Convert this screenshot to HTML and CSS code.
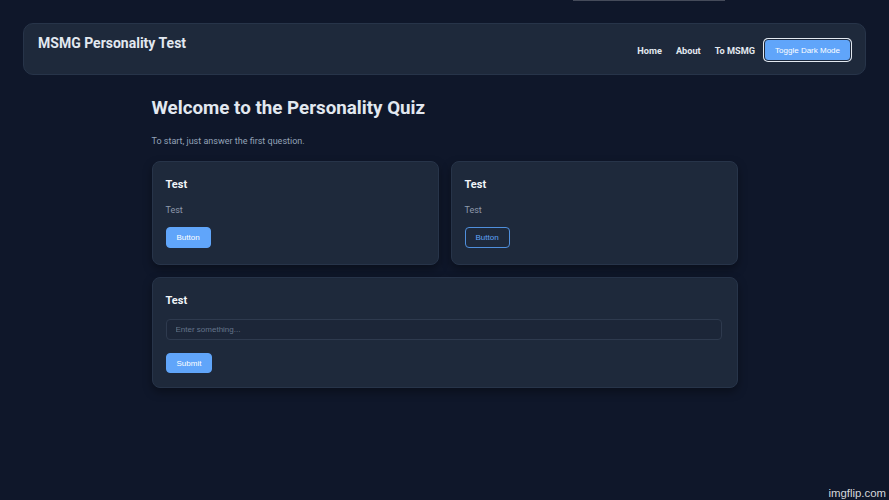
FILE: index.html
```html
<!DOCTYPE html>
<html lang="en">

<head>
    <meta charset="UTF-8">
    <meta name="viewport" content="width=device-width, initial-scale=1.0">
    <title>MSMG Personality Test</title>
    <link rel="stylesheet" href="styles.css">
</head>

<body>
    <div class="top-line"></div>

    <!-- Navigation bar -->
    <nav class="navbar">
        <div class="brand">MSMG Personality Test</div>
        <div class="nav-links">
            <a href="#" class="nav-link">Home</a>
            <a href="#" class="nav-link">About</a>
            <a href="#" class="nav-link">To MSMG</a>
            <button type="button" class="toggle-btn">Toggle Dark Mode</button>
        </div>
    </nav>

    <main class="container">
        <h1>Welcome to the Personality Quiz</h1>
        <p class="intro">To start, just answer the first question.</p>

        <div class="card-row">
            <div class="card">
                <h2>Test</h2>
                <p class="card-text">Test</p>
                <button type="button" class="btn">Button</button>
            </div>
            <div class="card">
                <h2>Test</h2>
                <p class="card-text">Test</p>
                <button type="button" class="btn btn-outline">Button</button>
            </div>
        </div>

        <div class="card card-form">
            <h2>Test</h2>
            <input type="text" class="text-input" placeholder="Enter something...">
            <button type="button" class="btn btn-submit">Submit</button>
        </div>
    </main>

    <span class="watermark">imgflip.com</span>
</body>

</html>
```

FILE: styles.css
```css
/* General Styles */
body {
    background-color: #0f172a;
    color: #e2e8f0;
    font-family: Roboto, "Liberation Sans", sans-serif;
    margin: 0;
    padding: 23px;
    min-height: 500px;
    box-sizing: border-box;
    position: relative;
}

.top-line {
    position: absolute;
    top: 0;
    left: 573px;
    width: 152px;
    height: 1px;
    background-color: #454b5a;
}

/* Navbar */
.navbar {
    display: flex;
    justify-content: space-between;
    align-items: flex-start;
    padding: 11px 14px 13px 14px;
    background-color: #1e293b;
    border: 1px solid #273449;
    border-radius: 10px;
}

.brand {
    font-size: 14px;
    line-height: 16px;
    font-weight: 700;
    color: #e2e8f0;
}

.nav-links {
    display: flex;
    align-items: center;
    gap: 8px;
    margin-top: 4px;
}

.nav-link {
    color: #e2e8f0;
    text-decoration: none;
    font-size: 9.2px;
    font-weight: 700;
    margin-right: 6px;
}

.nav-link:last-of-type {
    margin-right: 1px;
}

.toggle-btn {
    height: 22px;
    padding: 0 10px;
    background-color: #60a5fa;
    color: #ffffff;
    border: 1px solid #1e293b;
    border-radius: 4px;
    box-shadow: 0 0 0 1px #e2e8f0;
    font-family: "Liberation Sans", Arial, sans-serif;
    font-size: 8px;
    cursor: pointer;
}

/* Main content */
.container {
    max-width: 586px;
    margin: 0 auto;
    padding-top: 21px;
}

h1 {
    margin: 0;
    font-size: 18.75px;
    line-height: 24px;
    font-weight: 700;
    color: #e2e8f0;
}

.intro {
    margin: 15px 0 14px;
    font-size: 9px;
    line-height: 12px;
    color: #94a3b8;
}

.card-row {
    display: grid;
    grid-template-columns: 1fr 1fr;
    gap: 12px;
    margin-bottom: 12px;
}

.card {
    display: flex;
    flex-direction: column;
    align-items: flex-start;
    padding: 16px 15px 16px 13px;
    background-color: #1e293b;
    border: 1px solid #273449;
    border-radius: 8px;
    box-shadow: 0 4px 10px rgba(0, 0, 0, 0.35);
}

.card-form {
    padding-bottom: 14px;
}

.card h2 {
    margin: 0;
    font-size: 11px;
    line-height: 14px;
    font-weight: 700;
    color: #f1f5f9;
}

.card-text {
    margin: 12px 0 11px;
    font-size: 9px;
    line-height: 12px;
    color: #8e99ab;
}

.btn {
    height: 21px;
    padding: 0 10px;
    background-color: #60a5fa;
    color: #ffffff;
    border: 1px solid #60a5fa;
    border-radius: 4px;
    font-family: "Liberation Sans", Arial, sans-serif;
    font-size: 8px;
    cursor: pointer;
}

.btn-outline {
    background-color: transparent;
    color: #60a5fa;
    border-color: #4f8fdc;
}

.text-input {
    box-sizing: border-box;
    width: 100%;
    height: 21px;
    margin: 11px 0 13px;
    padding: 0 9px;
    background-color: #1c2638;
    color: #e2e8f0;
    border: 1px solid #2e3a4e;
    border-radius: 4px;
    font-family: "Liberation Sans", Arial, sans-serif;
    font-size: 8px;
}

.text-input::placeholder {
    color: #64748b;
}

.btn-submit {
    height: 20px;
    padding: 0 10px;
}

.watermark {
    position: absolute;
    right: 3px;
    bottom: 1px;
    font-family: "Liberation Sans", Arial, sans-serif;
    font-size: 11.4px;
    color: #d4d6da;
}
```
